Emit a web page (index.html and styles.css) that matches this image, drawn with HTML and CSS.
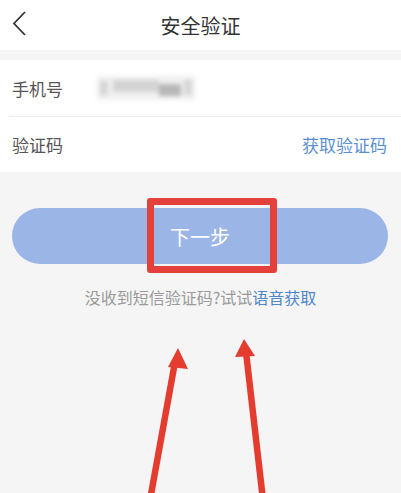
FILE: index.html
```html
<!DOCTYPE html>
<html lang="zh">
<head>
<meta charset="utf-8">
<link rel="stylesheet" href="styles.css">
</head>
<body>
<div class="page">
  <header class="topbar">
    <svg class="back" width="20" height="28" viewBox="0 0 20 28"><path d="M13 2 L2 13.5 L13 25" fill="none" stroke="#333" stroke-width="1.8"/></svg>
    <div class="title">安全验证</div>
  </header>
  <section class="form">
    <div class="row">
      <span class="label">手机号</span>
      <span class="masked"><i class="b0"></i><i class="b1"></i><i class="b2"></i><i class="b3"></i><i class="b4"></i></span>
    </div>
    <div class="row">
      <span class="label">验证码</span>
      <span class="getcode">获取验证码</span>
    </div>
  </section>
  <div class="btnwrap">
    <div class="btn">下一步</div>
    <div class="mark"></div>
  </div>
  <p class="hint">没收到短信验证码?试试<span class="link">语音获取</span></p>
  <svg class="arrows" width="401" height="493" viewBox="0 0 401 493">
    <line x1="150" y1="500" x2="175" y2="362" stroke="#e43d30" stroke-width="6.5"/>
    <polygon points="178,348 168,367 188,369" fill="#e43d30"/>
    <line x1="263" y1="500" x2="246" y2="352" stroke="#e43d30" stroke-width="6.5"/>
    <polygon points="244,339 235,357 255,356" fill="#e43d30"/>
  </svg>
</div>
</body>
</html>
```
FILE: styles.css
```css
html, body { margin: 0; padding: 0; }
body {
  background: #f5f5f5;
  font-family: "Noto Sans CJK SC", "Noto Sans", sans-serif;
  width: 401px;
  height: 493px;
  overflow: hidden;
}
.page { position: relative; width: 401px; height: 493px; }
.topbar {
  height: 50px;
  background: #fff;
  display: flex;
  align-items: center;
  justify-content: center;
  position: relative;
}
.back { position: absolute; left: 12px; top: 10px; }
.title { font-size: 20px; color: #333; }
.form { background: #fff; margin-top: 10px; padding-left: 9px; }
.row {
  height: 56px;
  display: flex;
  align-items: center;
  padding-left: 3px;
  padding-right: 14px;
}
.row + .row { border-top: 1px solid #eeeeee; height: 55px; }
.label { font-size: 17px; color: #555; width: 85px; }
.masked {
  position: relative;
  width: 98px;
  height: 24px;
  filter: blur(2px);
}
.masked i { position: absolute; display: block; }
.b0 { left: 0; top: 0; width: 98px; height: 24px; background: #f0f0f0; }
.b1 { left: 3px; top: 5px; width: 8px; height: 14px; background: #d6d6d6; }
.b2 { left: 16px; top: 4px; width: 46px; height: 12px; background: #d4d4d4; }
.b3 { left: 62px; top: 8px; width: 22px; height: 12px; background: #b8b8b8; }
.b4 { left: 87px; top: 4px; width: 8px; height: 15px; background: #d8d8d8; }
.getcode { margin-left: auto; font-size: 17px; color: #5b8fd2; }
.btnwrap { position: relative; margin: 36px 13px 0 12px; }
.btn {
  height: 56px;
  border-radius: 28px;
  background: #9bb6e6;
  color: #fff;
  font-size: 20px;
  display: flex;
  align-items: center;
  justify-content: center;
}
.mark {
  position: absolute;
  left: 135px;
  top: -10px;
  width: 116px;
  height: 61px;
  border: 7px solid #e4413a;
  border-radius: 3px;
}
.hint {
  margin: 21px 0 0;
  text-align: center;
  font-size: 16px;
  color: #9a9a9a;
}
.link { color: #4e87cc; }
.arrows { position: absolute; left: 0; top: 0; pointer-events: none; }
```
